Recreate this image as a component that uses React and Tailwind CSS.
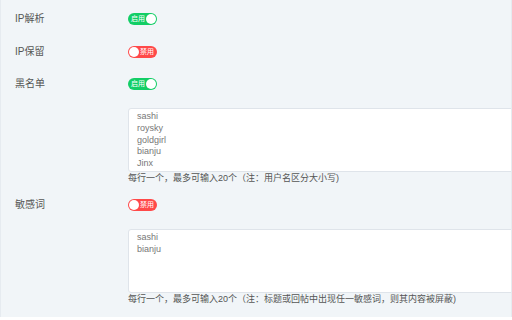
import React from 'react';

function Toggle({ on }) {
    return (
        <div
            className={`relative flex items-center w-[29px] h-[12px] rounded-full ${on ? 'bg-[#13ce66]' : 'bg-[#ff4949]'}`}
        >
            {on ? (
                <>
                    <span className="pl-[3px] text-[7px] leading-none text-white">启用</span>
                    <span className="absolute right-[1px] top-[1px] w-[10px] h-[10px] rounded-full bg-white" />
                </>
            ) : (
                <>
                    <span className="absolute left-[1px] top-[1px] w-[10px] h-[10px] rounded-full bg-white" />
                    <span className="ml-auto pr-[3px] text-[7px] leading-none text-white">禁用</span>
                </>
            )}
        </div>
    );
}

function Row({ label, on }) {
    return (
        <div className="flex items-center h-[13px]">
            <div className="w-[127px] pl-[14px] text-[10px] text-[#555]">{label}</div>
            <Toggle on={on} />
        </div>
    );
}

function Words({ lines, hint }) {
    return (
        <div className="pl-[127px]">
            <div className="h-[64px] bg-white border border-[#dfe4ea] rounded-[3px] pl-[8px] pt-[2px] text-[9px] leading-[11.8px] text-[#777] mr-[-4px]">
                {lines.map((l) => (
                    <div key={l}>{l}</div>
                ))}
            </div>
            <div className="text-[9px] leading-[12px] text-[#555]">{hint}</div>
        </div>
    );
}

export default function App() {
    return (
        <div
            className="w-[512px] h-[320px] overflow-hidden bg-white"
            style={{ fontFamily: '"Liberation Sans", "Noto Sans CJK SC", sans-serif' }}
        >
            <div className="h-[317px] bg-[#f1f5f8] border-l border-r border-[#e6ebf0] overflow-hidden">
                <div className="pt-[12px]">
                    <Row label="IP解析" on />
                </div>
                <div className="pt-[20px]">
                    <Row label="IP保留" on={false} />
                </div>
                <div className="pt-[19px]">
                    <Row label="黑名单" on />
                </div>
                <div className="pt-[18px]">
                    <Words
                        lines={['sashi', 'roysky', 'goldgirl', 'bianju', 'Jinx']}
                        hint="每行一个，最多可输入20个（注：用户名区分大小写)"
                    />
                </div>
                <div className="pt-[14px]">
                    <Row label="敏感词" on={false} />
                </div>
                <div className="pt-[18px]">
                    <Words
                        lines={['sashi', 'bianju']}
                        hint="每行一个，最多可输入20个（注：标题或回帖中出现任一敏感词，则其内容被屏蔽)"
                    />
                </div>
            </div>
        </div>
    );
}
